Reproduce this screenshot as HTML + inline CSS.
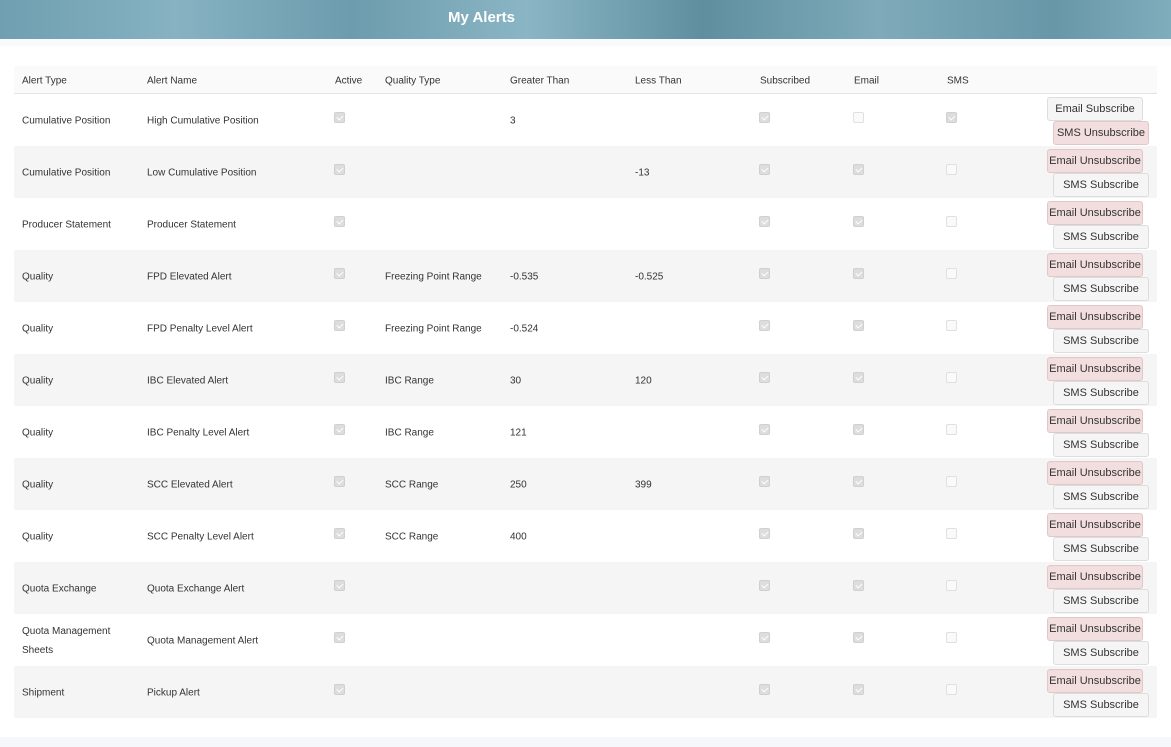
<!DOCTYPE html>
<html><head><style>
*{box-sizing:border-box;margin:0;padding:0}
body{width:1171px;height:747px;background:#fff;font-family:"Liberation Sans",sans-serif;position:relative;overflow:hidden;color:#333}
.hdr{position:absolute;left:0;top:0;width:1171px;height:39px;background:linear-gradient(90deg,#6f9fb0 0%,#86b2c2 15%,#6d9cad 30%,#8ab5c4 45%,#5f8f9f 60%,#7eaab9 75%,#6897a8 90%,#80adbc 100%)}
.hdr span{position:absolute;left:448px;top:9px;color:#fff;font-weight:bold;font-size:15px}
.strip{position:absolute;left:0;top:39px;width:1171px;height:7px;background:#f8fafd}
.foot{position:absolute;left:0;top:737px;width:1171px;height:10px;background:#f5f7fa}
.row{position:absolute;left:14px;width:1143px;height:52px;font-size:10px}
.row.g{background:#f5f5f5}
.th{position:absolute;left:14px;top:66px;width:1143px;height:28px;background:#fafafa;border-bottom:1px solid #e3e3e3;font-size:10px}
.c{position:absolute;top:50%;transform:translateY(-50%);line-height:19px;margin-top:1px}
.cb{position:absolute;top:18px;width:11px;height:11px;border:1px solid #e0e0e0;border-radius:2px;background:#fafafa}
.cb.k{background:#ddd;border-color:#d0d0d0}
.cb.k:after{content:"";position:absolute;left:3px;top:1px;width:3px;height:5px;border:solid #fff;border-width:0 1.5px 1.5px 0;transform:rotate(45deg)}
.b{position:absolute;width:96px;height:24px;font-size:11px;text-align:center;line-height:22px;border:1px solid #ddd;border-radius:3px;background:#f5f5f5;color:#333;white-space:nowrap}
.b.u{background:#f2dede;border-color:#e0c8c8}
.e{left:1033px;top:3px}.s{left:1039px;top:27px}
</style></head><body>
<div class="hdr"><span>My Alerts</span></div>
<div class="strip"></div>
<div class="th">
<div class="c" style="left:8px">Alert Type</div><div class="c" style="left:133px">Alert Name</div><div class="c" style="left:321px">Active</div><div class="c" style="left:371px">Quality Type</div><div class="c" style="left:496px">Greater Than</div><div class="c" style="left:621px">Less Than</div><div class="c" style="left:746px">Subscribed</div><div class="c" style="left:840px">Email</div><div class="c" style="left:933px">SMS</div>
</div>
<div id="rows"></div>
<div class="foot"></div>
<script>
var d=[["Cumulative Position","High Cumulative Position","","3","",0,1],
["Cumulative Position","Low Cumulative Position","","","-13",1,0],
["Producer Statement","Producer Statement","","","",1,0],
["Quality","FPD Elevated Alert","Freezing Point Range","-0.535","-0.525",1,0],
["Quality","FPD Penalty Level Alert","Freezing Point Range","-0.524","",1,0],
["Quality","IBC Elevated Alert","IBC Range","30","120",1,0],
["Quality","IBC Penalty Level Alert","IBC Range","121","",1,0],
["Quality","SCC Elevated Alert","SCC Range","250","399",1,0],
["Quality","SCC Penalty Level Alert","SCC Range","400","",1,0],
["Quota Exchange","Quota Exchange Alert","","","",1,0],
["Quota Management<br>Sheets","Quota Management Alert","","","",1,0],
["Shipment","Pickup Alert","","","",1,0]];
var h="";
d.forEach(function(r,i){
var em=r[5],sm=r[6];
h+='<div class="row'+(i%2?' g':'')+'" style="top:'+(94+i*52)+'px">'+
'<div class="c" style="left:8px">'+r[0]+'</div><div class="c" style="left:133px">'+r[1]+'</div>'+
'<div class="cb k" style="left:320px"></div>'+
'<div class="c" style="left:371px">'+r[2]+'</div><div class="c" style="left:496px">'+r[3]+'</div><div class="c" style="left:621px">'+r[4]+'</div>'+
'<div class="cb k" style="left:745px"></div><div class="cb'+(em?' k':'')+'" style="left:839px"></div><div class="cb'+(sm?' k':'')+'" style="left:932px"></div>'+
'<div class="b e'+(em?' u':'')+'">'+(em?'Email Unsubscribe':'Email Subscribe')+'</div>'+
'<div class="b s'+(sm?' u':'')+'">'+(sm?'SMS Unsubscribe':'SMS Subscribe')+'</div></div>';
});
document.getElementById("rows").innerHTML=h;
</script>
</body></html>
